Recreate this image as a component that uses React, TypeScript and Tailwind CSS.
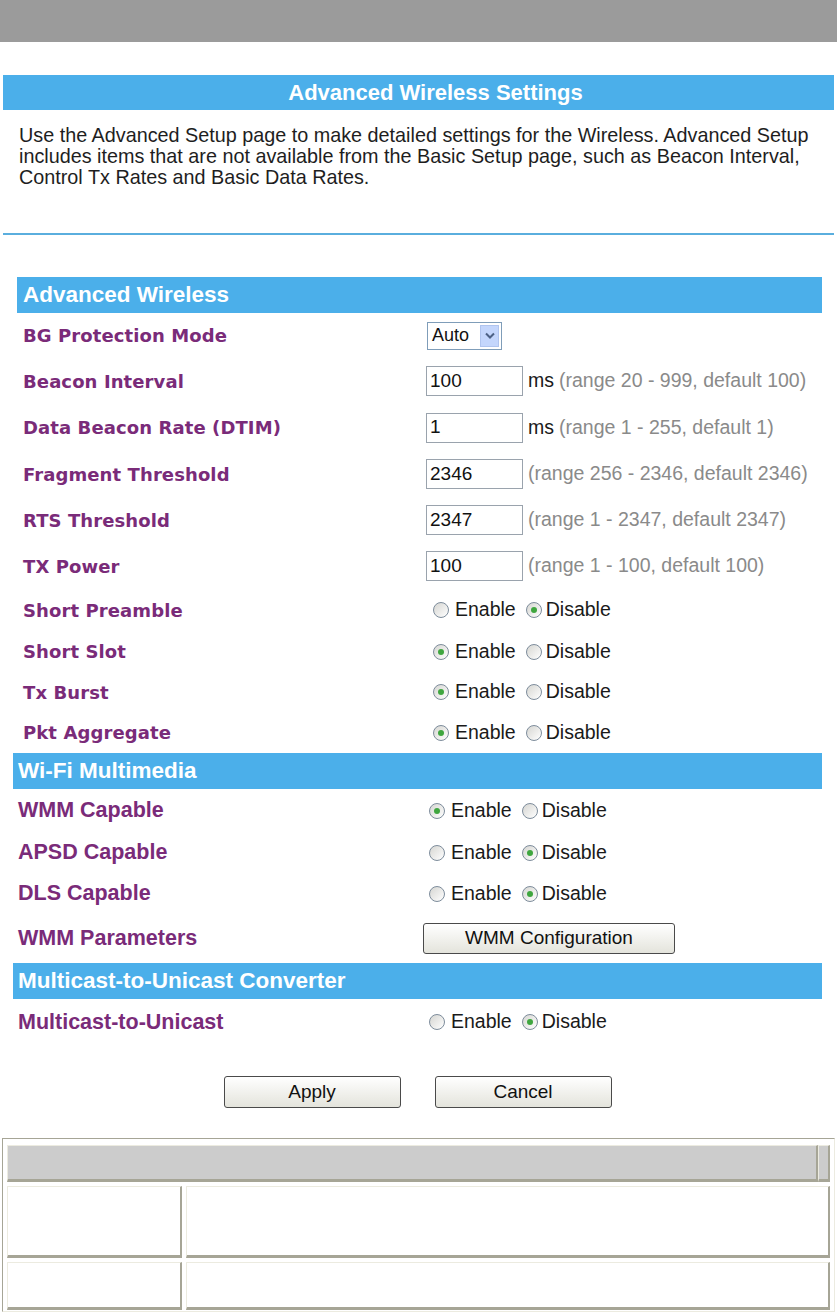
import React from 'react';

const arial = "font-['Liberation_Sans',Arial,sans-serif]";
const verdana = "font-['DejaVu_Sans',Verdana,sans-serif]";

function Radio({ checked }: { checked?: boolean }) {
  return (
    <span className="shrink-0 inline-flex items-center justify-center w-[16px] h-[16px] rounded-full border border-[#7d8c9b] bg-linear-to-br from-[#d6d6d2] to-white">
      {checked && <span className="w-[6px] h-[6px] rounded-full bg-[#3fa63f]" />}
    </span>
  );
}

function Toggle({ on, first }: { on: boolean; first?: boolean }) {
  return (
    <div className={`flex items-center text-[19.5px] text-[#1a1a1a] ${arial} ${first ? 'pl-[7px]' : 'pl-[3px]'}`}>
      <Radio checked={on} />
      <span className="ml-[6px]">Enable</span>
      <span className="ml-[10px] flex">
        <Radio checked={!on} />
      </span>
      <span className="ml-[4px]">Disable</span>
    </div>
  );
}

function TextBox({ value, hint, unit }: { value: string; hint: string; unit?: boolean }) {
  return (
    <div className={`flex items-center text-[19px] ${arial}`}>
      <div className="shrink-0 w-[97px] h-[30px] border border-[#9aa3ad] flex items-center pl-[3px] text-[#111]">{value}</div>
      <span className="ml-[5px] text-[#1a1a1a] text-[19.5px]">{unit ? 'ms' : ''}</span>
      <span className={`${unit ? 'ml-[5px]' : ''} text-[#8a8a8a] text-[19.5px]`}>{hint}</span>
    </div>
  );
}

function Row1({ label, h, children }: { label: string; h: string; children?: React.ReactNode }) {
  return (
    <div className={`flex items-center ${h}`}>
      <div className={`shrink-0 w-[409px] pl-[6px] text-[18px] tracking-[0.1px] font-bold text-[#7a2b79] ${verdana}`}>{label}</div>
      {children}
    </div>
  );
}

function Row2({ label, h, children }: { label: string; h: string; children?: React.ReactNode }) {
  return (
    <div className={`flex items-center ${h}`}>
      <div className={`shrink-0 w-[413px] pl-[5px] text-[21.5px] font-bold text-[#7a2b79] ${arial}`}>{label}</div>
      {children}
    </div>
  );
}

function Bar({ title, pl }: { title: string; pl: string }) {
  return (
    <div className={`h-[36px] bg-[#4bafea] flex items-center ${pl} text-white font-bold text-[22.5px] ${arial}`}>{title}</div>
  );
}

function Btn({ label, w, size }: { label: string; w: string; size: string }) {
  return (
    <div className={`${w} ${size} border border-[#4a4a4a] rounded-[3px] bg-linear-to-b from-white to-[#e4e4dc] flex items-center justify-center text-[19px] text-[#111] ${arial}`}>
      {label}
    </div>
  );
}

const cellLight = 'border-t border-l border-[#ecebe0]';
const cellDark = 'border-b-[3px] border-r-[2px] border-b-[#a6a596] border-r-[#a6a596]';

export default function App() {
  return (
    <div className="w-[837px] h-[1312px] bg-white overflow-hidden">
      <div className="h-[42px] bg-[#9b9b9b]" />

      <div className={`mt-[33px] mx-[3px] h-[35px] bg-[#4bafea] flex items-center justify-center pl-[34px] text-white font-bold text-[22px] ${arial}`}>
        Advanced Wireless Settings
      </div>

      <p className={`mt-[15px] pl-[19px] pr-[10px] text-[19.8px] leading-[21px] text-[#1e1e1e] ${arial}`}>
        Use the Advanced Setup page to make detailed settings for the Wireless. Advanced Setup includes items that are not available from the Basic Setup page, such as Beacon Interval, Control Tx Rates and Basic Data Rates.
      </p>

      <div className="mt-[45px] mx-[3px] h-[2px] bg-[#5aaede]" />

      {/* Advanced Wireless */}
      <div className="mt-[42px] ml-[17px] w-[805px]">
        <Bar title="Advanced Wireless" pl="pl-[6px]" />
        <Row1 label="BG Protection Mode" h="h-[45px]">
          <div className={`ml-[1px] w-[75px] h-[28px] border border-[#7f9db9] flex items-center justify-between pl-[4px] pr-[2px] text-[18px] text-[#111] ${arial}`}>
            <span>Auto</span>
            <span className="w-[19px] h-[22px] bg-[#c4d6fc] border border-[#b0c4ee] flex items-center justify-center">
              <svg width="10" height="7" viewBox="0 0 10 7">
                <path d="M1 1.5 L5 5.5 L9 1.5" fill="none" stroke="#4d6185" strokeWidth="2" />
              </svg>
            </span>
          </div>
        </Row1>
        <Row1 label="Beacon Interval" h="h-[46px]">
          <TextBox value="100" unit hint="(range 20 - 999, default 100)" />
        </Row1>
        <Row1 label="Data Beacon Rate (DTIM)" h="h-[47px]">
          <TextBox value="1" unit hint="(range 1 - 255, default 1)" />
        </Row1>
        <Row1 label="Fragment Threshold" h="h-[46px]">
          <TextBox value="2346" hint="(range 256 - 2346, default 2346)" />
        </Row1>
        <Row1 label="RTS Threshold" h="h-[46px]">
          <TextBox value="2347" hint="(range 1 - 2347, default 2347)" />
        </Row1>
        <Row1 label="TX Power" h="h-[46px]">
          <TextBox value="100" hint="(range 1 - 100, default 100)" />
        </Row1>
        <Row1 label="Short Preamble" h="h-[42px]">
          <Toggle on={false} first />
        </Row1>
        <Row1 label="Short Slot" h="h-[41px]">
          <Toggle on first />
        </Row1>
        <Row1 label="Tx Burst" h="h-[40px]">
          <Toggle on first />
        </Row1>
        <Row1 label="Pkt Aggregate" h="h-[41px]">
          <Toggle on first />
        </Row1>
      </div>

      {/* Wi-Fi Multimedia + Multicast */}
      <div className="ml-[13px] w-[809px]">
        <Bar title="Wi-Fi Multimedia" pl="pl-[5px]" />
        <Row2 label="WMM Capable" h="h-[43px]">
          <Toggle on />
        </Row2>
        <Row2 label="APSD Capable" h="h-[41px]">
          <Toggle on={false} />
        </Row2>
        <Row2 label="DLS Capable" h="h-[41px]">
          <Toggle on={false} />
        </Row2>
        <Row2 label="WMM Parameters" h="h-[49px]">
          <div className="-ml-[3px]">
            <Btn label="WMM Configuration" w="w-[252px]" size="h-[31px]" />
          </div>
        </Row2>
        <Bar title="Multicast-to-Unicast Converter" pl="pl-[5px]" />
        <Row2 label="Multicast-to-Unicast" h="h-[46px]">
          <Toggle on={false} />
        </Row2>
      </div>

      <div className="mt-[31px] flex justify-center gap-[34px] pr-[2px]">
        <Btn label="Apply" w="w-[177px]" size="h-[32px]" />
        <Btn label="Cancel" w="w-[177px]" size="h-[32px]" />
      </div>

      {/* help table */}
      <div className="mt-[30px] mx-[2px] h-[174px] border border-t-[#a6a596] border-l-[#a6a596] border-r-[#ecebe0] border-b-[#ecebe0] px-[4px] pt-[6px] flex flex-col gap-[4px]">
        <div className="flex h-[37px]">
          <div className={`flex-1 bg-[#cccccc] ${cellLight} ${cellDark}`} />
          <div className={`w-[12px] bg-[#cccccc] ${cellLight} ${cellDark}`} />
        </div>
        <div className="flex h-[72px] gap-[4px]">
          <div className={`w-[175px] ${cellLight} ${cellDark}`} />
          <div className={`flex-1 ${cellLight} ${cellDark}`} />
        </div>
        <div className="flex h-[48px] gap-[4px]">
          <div className={`w-[175px] ${cellLight} ${cellDark}`} />
          <div className={`flex-1 ${cellLight} ${cellDark}`} />
        </div>
      </div>
    </div>
  );
}
